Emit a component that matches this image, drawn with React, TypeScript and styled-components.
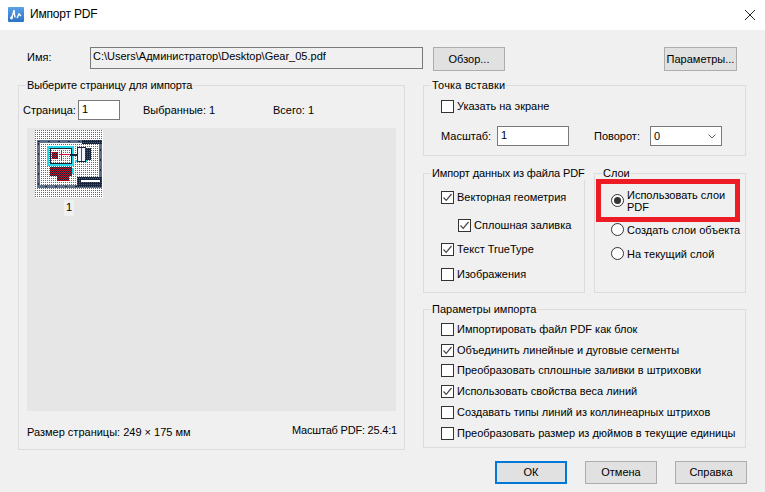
import { FC, ReactNode } from 'react'
import styled, { createGlobalStyle } from 'styled-components'

const GlobalStyle = createGlobalStyle`
  html, body {
    margin: 0;
    padding: 0;
    background: #f0f0f0;
  }

  body {
    font-family: 'Liberation Sans', Arial, sans-serif;
    font-size: 11px;
    line-height: 13px;
    color: #000;
  }
`

const Dialog = styled.div`
  width: 765px;
  height: 492px;
  overflow: hidden;
  background: #f0f0f0;
`

const TitleBar = styled.div`
  height: 30px;
  display: flex;
  align-items: center;
  padding: 0 10px 1px 8px;
  box-sizing: border-box;
  background: #fff;
  font-size: 12px;
`

const TitleText = styled.span`
  margin-left: 6px;
  flex: 1;
  letter-spacing: -0.2px;
`

const Content = styled.div`
  padding: 17px 0 0 18px;
`

const FileRow = styled.div`
  display: flex;
  align-items: flex-start;
  height: 24px;
  padding-left: 9px;
`

const FileLabel = styled.label`
  width: 63px;
  padding-top: 4px;
`

const PathInput = styled.input`
  width: 333px;
  height: 22px;
  margin: 0 10px 0 0;
  padding: 0 0 4px 2px;
  box-sizing: border-box;
  border: 1px solid #7a7a7a;
  background: #f0f0f0;
  font: inherit;
  color: #000;
`

const Button = styled.button<{ $primary?: boolean }>`
  flex: none;
  width: 72px;
  height: 24px;
  padding: 0;
  box-sizing: border-box;
  border: ${(p) => (p.$primary ? '2px solid #0078d7' : '1px solid #adadad')};
  background: #e1e1e1;
  font: inherit;
  color: #000;
`

const ParamsButton = styled(Button)`
  width: 73px;
  margin-left: 159px;
`

const FooterButton = styled(Button)`
  height: 23px;
`

const Columns = styled.div`
  display: flex;
  margin-top: 8px;
`

const RightColumn = styled.div`
  width: 323px;
  margin-left: 18px;
  display: flex;
  flex-direction: column;
`

const Group = styled.fieldset<{ $width: number; $height: number; $top?: number }>`
  width: ${(p) => p.$width}px;
  height: ${(p) => p.$height}px;
  margin: ${(p) => p.$top ?? 0}px 0 0;
  padding: 0;
  box-sizing: border-box;
  min-width: 0;
  border: 1px solid #dcdcdc;
  border-radius: 0;
`

const GroupTitle = styled.legend<{ $spacing?: number }>`
  margin-left: 7px;
  padding: 0 1px;
  white-space: nowrap;
  letter-spacing: ${(p) => p.$spacing ?? 0}px;
`

const PageRow = styled.div`
  display: flex;
  align-items: center;
  height: 20px;
  margin-top: 8px;
  padding-left: 4px;
`

const PageLabel = styled.span<{ $width: number }>`
  width: ${(p) => p.$width}px;
`

const TextField = styled.input<{ $width: number }>`
  width: ${(p) => p.$width}px;
  height: 20px;
  margin: 0;
  padding: 0 0 3px 3px;
  box-sizing: border-box;
  border: 1px solid #7a7a7a;
  background: #fff;
  font: inherit;
  color: #000;
`

const PageInput = styled(TextField)`
  margin-right: 23px;
`

const PreviewPanel = styled.div`
  height: 283px;
  margin: 8px 8px 0;
  padding: 2px 0 0 8px;
  box-sizing: border-box;
  background: #e6e6e6;
`

const Thumb = styled.div`
  width: 68px;
  display: flex;
  flex-direction: column;
  align-items: center;
`

const ThumbLabel = styled.span`
  width: 10px;
  height: 16px;
  margin-top: 2px;
  background: #f0f0f0;
  line-height: 15px;
  text-align: center;
`

const FooterRow = styled.div`
  display: flex;
  justify-content: space-between;
  margin-top: 13px;
  padding: 0 7px 0 8px;
`

const PageSize = styled.span`
  padding-top: 2px;
`

const PdfScale = styled.span`
  letter-spacing: -0.2px;
`

const InsertRow = styled.div`
  display: flex;
  align-items: center;
  height: 20px;
  margin-top: 13px;
  padding-left: 17px;
`

const InsertLabel = styled.span<{ $width: number }>`
  width: ${(p) => p.$width}px;
`

const ScaleInput = styled(TextField)`
  margin-right: 25px;
`

const SelectBox = styled.div`
  width: 72px;
  height: 20px;
  display: flex;
  align-items: center;
  justify-content: space-between;
  padding: 0 5px 0 3px;
  box-sizing: border-box;
  border: 1px solid #7a7a7a;
  background: #fff;
`

const MiddleRow = styled.div`
  display: flex;
  gap: 9px;
  margin-top: 11px;
`

const Option = styled.label<{ $indent?: number; $top: number }>`
  display: flex;
  align-items: center;
  height: 13px;
  margin: ${(p) => p.$top}px 0 0 ${(p) => p.$indent ?? 17}px;
  white-space: nowrap;
`

const Box = styled.span`
  width: 13px;
  height: 13px;
  flex: none;
  display: flex;
  margin-right: 3px;
  box-sizing: border-box;
  border: 1px solid #333;
  background: #fff;
`

const RadioMark = styled.span<{ $on?: boolean }>`
  position: relative;
  width: 13px;
  height: 13px;
  flex: none;
  margin-right: 3px;
  box-sizing: border-box;
  border: 1px solid #333;
  border-radius: 50%;
  background: #fff;

  &::after {
    content: '';
    display: ${(p) => (p.$on ? 'block' : 'none')};
    position: absolute;
    inset: 2px;
    border-radius: 50%;
    background: #333;
  }
`

const LayerGroup = styled(Group)`
  position: relative;
`

const RadioText = styled.span`
  line-height: 12px;
`

const Highlight = styled.div`
  position: absolute;
  left: 1px;
  top: -1px;
  width: 144px;
  height: 43px;
  box-sizing: border-box;
  border: 5px solid #ed1c24;
`

const ParamsList = styled.div`
  display: grid;
  grid-auto-rows: 20.8px;
  align-items: center;
  margin-top: 3px;
`

const ParamRow = styled(Option)`
  margin-top: 0;
`

const ButtonRow = styled.div`
  display: flex;
  gap: 18px;
  margin-top: 13px;
  padding-left: 72px;
`

const Check: FC<{ on?: boolean }> = ({ on }) => (
  <Box>
    {on && (
      <svg width="11" height="11" viewBox="0 0 11 11">
        <path d="M1.5 5.5 L4.2 8.3 L9.5 2" fill="none" stroke="#444" strokeWidth="1.2" />
      </svg>
    )}
  </Box>
)

const Radio: FC<{ on?: boolean; top: number; children: ReactNode }> = ({ on, top, children }) => (
  <Option $top={top} $indent={16}>
    <RadioMark $on={on} />
    <RadioText>{children}</RadioText>
  </Option>
)

const AppIcon = () => (
  <svg width="16" height="15" viewBox="0 0 16 15">
    <defs>
      <linearGradient id="iconFill" x1="0" y1="0" x2="0" y2="1">
        <stop offset="0" stopColor="#5aa2e6" />
        <stop offset="1" stopColor="#2a72c4" />
      </linearGradient>
    </defs>
    <rect width="16" height="15" rx="1" fill="url(#iconFill)" />
    <path d="M3.5 11 L6 4 L7 10.5 M9 11 L11 7 L13 9" fill="none" stroke="#fff" strokeWidth="1.4" />
    <circle cx="3.5" cy="11" r="1.4" fill="#fff" />
    <circle cx="6" cy="4" r="1.1" fill="#fff" />
  </svg>
)

const CloseIcon = () => (
  <svg width="10" height="10" viewBox="0 0 10 10">
    <path d="M0 0 L10 10 M10 0 L0 10" stroke="#222" strokeWidth="1" />
  </svg>
)

const Chevron = () => (
  <svg width="8" height="5" viewBox="0 0 8 5">
    <path d="M0.5 0.5 L4 4 L7.5 0.5" fill="none" stroke="#606060" strokeWidth="1" />
  </svg>
)

const PageThumb = () => (
  <svg width="68" height="68" viewBox="0 0 68 68" shapeRendering="crispEdges">
    <defs>
      <pattern id="dots" width="2" height="2" patternUnits="userSpaceOnUse">
        <rect width="2" height="2" fill="#fff" />
        <rect width="1" height="1" fill="#0a7fe0" />
      </pattern>
      <pattern id="dark" width="2" height="2" patternUnits="userSpaceOnUse">
        <rect width="2" height="2" fill="#16243c" />
        <rect width="1" height="1" fill="#4a5a72" />
      </pattern>
      <pattern id="red" width="2" height="2" patternUnits="userSpaceOnUse">
        <rect width="2" height="2" fill="#c81030" />
        <rect width="1" height="1" fill="#1a1a30" />
        <rect x="1" y="1" width="1" height="1" fill="#1a1a30" />
      </pattern>
    </defs>
    <rect width="68" height="68" fill="url(#dots)" />
    <rect x="3" y="11" width="62" height="45" fill="none" stroke="#5e6f88" strokeWidth="3" />
    <rect x="3" y="11" width="62" height="45" fill="none" stroke="#1a2438" strokeWidth="1" strokeDasharray="2 8" />
    <rect x="47" y="10" width="20" height="4" fill="url(#dark)" />
    <rect x="42" y="47" width="25" height="10" fill="url(#dark)" />
    <rect x="46" y="50" width="19" height="2" fill="#fff" />
    <rect x="13" y="17" width="25" height="18" fill="none" stroke="#22d8e8" strokeWidth="2" />
    <rect x="40" y="30" width="12" height="2" fill="#22d8e8" />
    <rect x="15" y="18" width="21" height="15" fill="none" stroke="#1a2438" />
    <rect x="17" y="22" width="6" height="7" fill="url(#red)" />
    <rect x="24" y="24" width="10" height="1" fill="#d01030" />
    <rect x="26" y="20" width="1" height="11" fill="#e01030" />
    <rect x="35" y="24" width="7" height="2" fill="#1a2438" />
    <rect x="42" y="17" width="8" height="14" fill="#f0f4fa" stroke="#1a2438" />
    <rect x="46" y="18" width="1" height="13" fill="#e01030" />
    <rect x="50" y="18" width="6" height="12" fill="url(#dark)" />
    <rect x="14" y="34" width="24" height="2" fill="#22d8e8" />
    <rect x="37" y="38" width="2" height="6" fill="#22d8e8" />
    <rect x="15" y="37" width="22" height="9" fill="url(#red)" />
    <rect x="22" y="46" width="12" height="5" fill="url(#red)" />
  </svg>
)

const dataOptions = [
  { text: 'Векторная геометрия', on: true, top: 11 },
  { text: 'Сплошная заливка', on: true, top: 15, indent: 34 },
  { text: 'Текст TrueType', on: true, top: 11 },
  { text: 'Изображения', on: false, top: 12 },
]

const importParams = [
  { text: 'Импортировать файл PDF как блок', on: false },
  { text: 'Объединить линейные и дуговые сегменты', on: true },
  { text: 'Преобразовать сплошные заливки в штриховки', on: false },
  { text: 'Использовать свойства веса линий', on: true },
  { text: 'Создавать типы линий из коллинеарных штрихов', on: false },
  { text: 'Преобразовать размер из дюймов в текущие единицы', on: false },
]

const App: FC = () => (
  <Dialog>
    <GlobalStyle />
    <TitleBar>
      <AppIcon />
      <TitleText>Импорт PDF</TitleText>
      <CloseIcon />
    </TitleBar>
    <Content>
      <FileRow>
        <FileLabel>Имя:</FileLabel>
        <PathInput readOnly value="C:\Users\Администратор\Desktop\Gear_05.pdf" />
        <Button>Обзор...</Button>
        <ParamsButton>Параметры...</ParamsButton>
      </FileRow>
      <Columns>
        <Group $width={387} $height={371}>
          <GroupTitle $spacing={-0.1}>Выберите страницу для импорта</GroupTitle>
          <PageRow>
            <PageLabel $width={55}>Страница:</PageLabel>
            <PageInput $width={42} readOnly value="1" />
            <PageLabel $width={130}>Выбранные: 1</PageLabel>
            <span>Всего: 1</span>
          </PageRow>
          <PreviewPanel>
            <Thumb>
              <PageThumb />
              <ThumbLabel>1</ThumbLabel>
            </Thumb>
          </PreviewPanel>
          <FooterRow>
            <PageSize>Размер страницы: 249 × 175 мм</PageSize>
            <PdfScale>Масштаб PDF: 25.4:1</PdfScale>
          </FooterRow>
        </Group>
        <RightColumn>
          <Group $width={323} $height={77}>
            <GroupTitle $spacing={0.2}>Точка вставки</GroupTitle>
            <Option $top={8}>
              <Check />
              Указать на экране
            </Option>
            <InsertRow>
              <InsertLabel $width={56}>Масштаб:</InsertLabel>
              <ScaleInput $width={72} readOnly value="1" />
              <InsertLabel $width={56}>Поворот:</InsertLabel>
              <SelectBox>
                0
                <Chevron />
              </SelectBox>
            </InsertRow>
          </Group>
          <MiddleRow>
            <Group $width={162} $height={126}>
              <GroupTitle $spacing={-0.12}>Импорт данных из файла PDF</GroupTitle>
              {dataOptions.map((o) => (
                <Option key={o.text} $top={o.top} $indent={o.indent}>
                  <Check on={o.on} />
                  {o.text}
                </Option>
              ))}
            </Group>
            <LayerGroup $width={152} $height={126}>
              <GroupTitle>Слои</GroupTitle>
              <Radio on top={14}>
                Использовать слои
                <br />
                PDF
              </Radio>
              <Radio top={16}>Создать слои объекта</Radio>
              <Radio top={11}>На текущий слой</Radio>
              <Highlight />
            </LayerGroup>
          </MiddleRow>
          <Group $width={323} $height={145} $top={10}>
            <GroupTitle>Параметры импорта</GroupTitle>
            <ParamsList>
              {importParams.map((o) => (
                <ParamRow key={o.text} $top={0}>
                  <Check on={o.on} />
                  {o.text}
                </ParamRow>
              ))}
            </ParamsList>
          </Group>
          <ButtonRow>
            <FooterButton $primary>ОК</FooterButton>
            <FooterButton>Отмена</FooterButton>
            <FooterButton>Справка</FooterButton>
          </ButtonRow>
        </RightColumn>
      </Columns>
    </Content>
  </Dialog>
)

export default App
